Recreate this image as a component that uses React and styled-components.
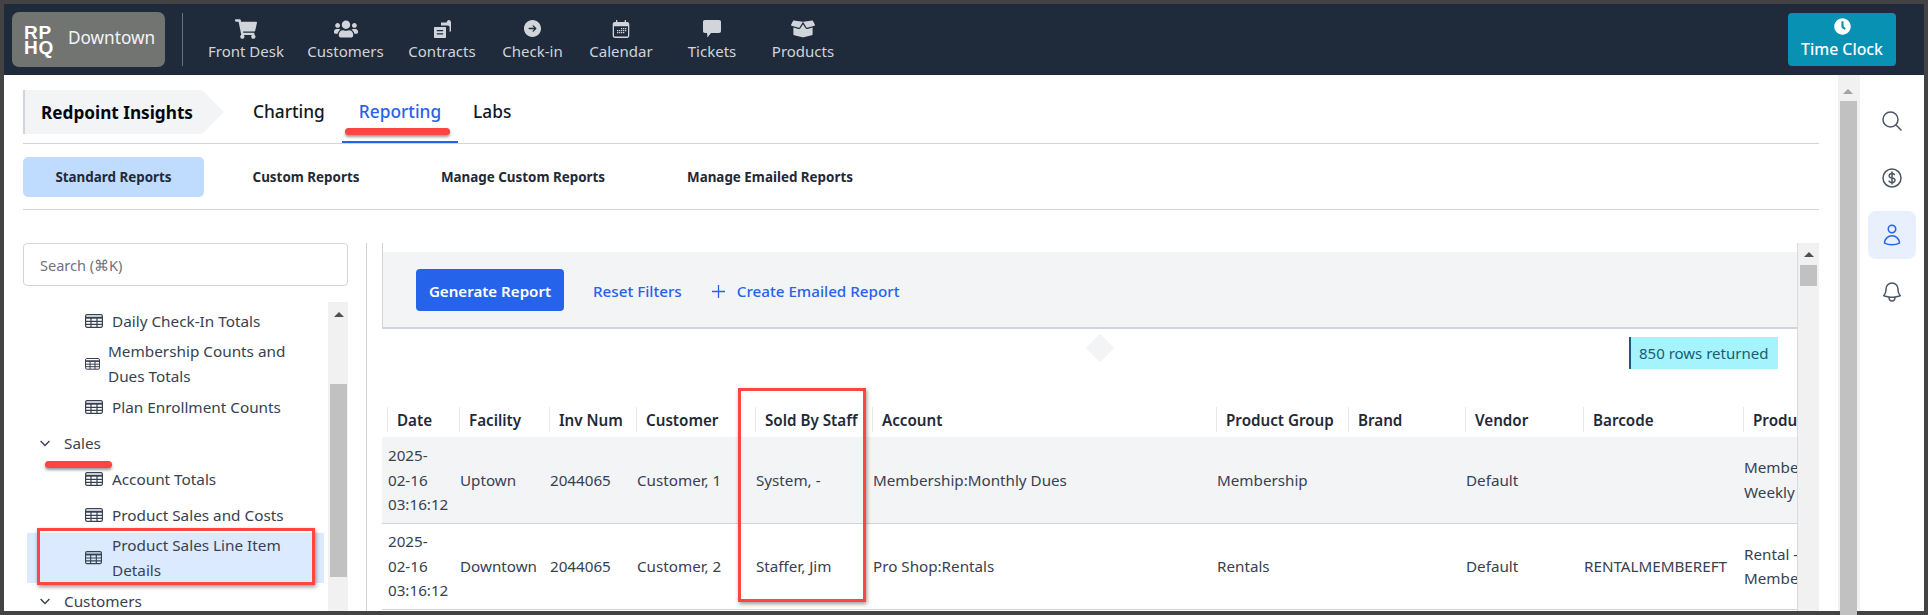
import React from 'react';
import styled, { createGlobalStyle } from 'styled-components';
import { FaShoppingCart, FaUsers, FaBoxOpen, FaClock } from 'react-icons/fa';
import { HiArrowRightCircle } from 'react-icons/hi2';

const Global = createGlobalStyle`
  html, body { margin: 0; padding: 0; background: #434343; }
  * { box-sizing: border-box; }
  body { font-family: "Noto Sans", "Open Sans", Arial, sans-serif; }
`;

const Frame = styled.div`
  position: relative; width: 1928px; height: 615px; padding: 4px; background: #434343;
  display: flex; flex-direction: column; overflow: hidden;
`;
const Nav = styled.header`
  height: 71px; flex: none; background: #1f2a3a; display: flex; align-items: center; padding: 0 28px 0 8px;
`;
const Brand = styled.div`
  width: 153px; height: 55px; background: #727472; border-radius: 7px; display: flex; align-items: center; padding-left: 12px; flex: none;
`;
const BrandMark = styled.div`
  font: bold 19px/15px "Liberation Sans", Arial, sans-serif; color: #fff; width: 44px; letter-spacing: .9px; margin-top: 1px;
`;
const BrandName = styled.span`
  color: #f3f4f6; font-size: 17.2px; margin-top: -4px;
`;
const NavDivider = styled.div`
  width: 1px; height: 53px; background: #667080; margin: 0 13px 0 17px; flex: none;
`;
const NavItem = styled.a`
  width: ${p => p.$w}px; flex: none; display: flex; flex-direction: column; align-items: center; color: #d1d5db; font-size: 15px; line-height: 20px; white-space: nowrap;
`;
const NavIcon = styled.span`
  height: 24px; display: flex; align-items: center; justify-content: center; margin-bottom: 0; margin-top: -2px; color: #d1d5db;
`;
const TimeClock = styled.button`
  margin-left: auto; width: 108px; height: 53px; border: 0; border-radius: 4px; background: #0891b2; color: #fff; font: 500 15.8px/20px "Noto Sans", sans-serif; display: flex; flex-direction: column; align-items: center; justify-content: center; padding: 0 0 3px; gap: 4px;
`;

const Body = styled.div`
  flex: 1; min-height: 0; display: flex; background: #fff;
`;
const Main = styled.main`
  width: 1815px; flex: none; padding: 15px 0 0 19px; display: flex; flex-direction: column; min-height: 0;
`;
const TabRow = styled.nav`
  height: 54px; flex: none; border-bottom: 1px solid #d1d5db; display: flex; align-items: flex-start;
`;
const Crumb = styled.div`
  width: 201px; height: 44px; background: #f3f4f6; border-left: 2px solid #d1d5db; font-weight: 700; font-size: 17.2px; color: #030712; display: flex; align-items: center; padding-left: 16px; clip-path: polygon(0 0, 179px 0, 100% 50%, 179px 100%, 0 100%);
`;
const Tab = styled.a`
  height: 53px; padding: 10px ${p => p.$px}px 0; margin-left: ${p => p.$ml ?? 0}px; display: flex; align-items: flex-start; font-size: 17.3px; line-height: 24px; font-weight: 500; color: ${p => p.$active ? '#2563eb' : '#111827'}; border-bottom: 2px solid ${p => p.$active ? '#2563eb' : 'transparent'};
`;
const SubRow = styled.nav`
  height: 66px; flex: none; padding-top: 13px; border-bottom: 1px solid #d1d5db; display: flex; align-items: flex-start;
`;
const SubTab = styled.a`
  height: 40px; width: ${p => p.$w}px; border-radius: 5px; background: ${p => p.$active ? '#bfdbfe' : 'transparent'}; display: flex; align-items: center; justify-content: center; font-size: 13.4px; font-weight: 700; color: #1f2937; white-space: nowrap;
`;
const Split = styled.div`
  flex: 1; min-height: 0; display: flex; padding-top: 33px;
`;
const Sidebar = styled.aside`
  width: 344px; flex: none; border-right: 1px solid #d1d5db; padding-right: 18px; display: flex; flex-direction: column; min-height: 0;
`;
const Search = styled.div`
  height: 43px; flex: none; border: 1px solid #d1d5db; border-radius: 4px; padding-left: 16px; display: flex; align-items: center; color: #6b7280; font-size: 14.5px;
`;
const Tree = styled.div`
  margin-top: 16px; flex: 1; min-height: 0; display: flex; overflow: hidden;
`;
const TreeList = styled.ul`
  list-style: none; margin: 0; padding: 1px 4px 0; width: 305px; flex: none; overflow: hidden;
`;
const Leaf = styled.li`
  min-height: 36px; display: flex; align-items: center; padding-left: 58px; gap: ${p => p.$gap ?? 9}px; color: #374151; font-size: 15.3px; line-height: 25px; background: ${p => p.$selected ? '#dbeafe' : 'transparent'};
`;
const Group = styled.li`
  height: 36px; display: flex; align-items: center; padding-left: 13px; gap: 14px; color: #374151; font-size: 15.3px;
`;
const LeafLabel = styled.span`
  max-width: 200px;
`;
const Scroll = styled.div`
  width: ${p => p.$w}px; flex: none; background: #f1f1f1; display: flex; flex-direction: column; align-items: center; border-left: ${p => p.$line ? '1px solid #d9dbdf' : '0'}; padding-right: ${p => p.$pr ?? 0}px;
`;
const ScrollArrow = styled.div`
  flex: none; margin-top: ${p => p.$mt}px; width: 0; height: 0; border-left: 5px solid transparent; border-right: 5px solid transparent; border-bottom: 5px solid ${p => p.$dim ? '#a3a3a3' : '#505050'};
`;
const ScrollThumb = styled.div`
  flex: none; width: 17px; height: ${p => p.$h}px; margin-top: ${p => p.$mt}px; background: #c1c1c1;
`;
const Report = styled.section`
  flex: 1; min-width: 0; display: flex; margin-left: 15px; min-height: 0;
`;
const ReportBody = styled.div`
  position: relative; width: 1415px; flex: none; overflow: hidden; display: flex; flex-direction: column; align-items: stretch;
`;
const FilterBox = styled.div`
  flex: none; padding-top: 9px; border-left: 1px solid #d1d5db; border-bottom: 2px solid #d1d5db;
`;
const FilterPanel = styled.div`
  height: 75px; background: #f3f4f6; display: flex; align-items: center; padding: 0 0 7px 33px;
`;
const Generate = styled.button`
  width: 148px; height: 42px; border: 0; border-radius: 4px; background: #2563eb; color: #fff; font: 600 15.1px "Noto Sans", sans-serif; padding: 3px 0 0; margin-top: 7px;
`;
const LinkBtn = styled.a`
  color: #2563eb; font-size: 15.2px; font-weight: 500; margin-left: ${p => p.$ml}px; margin-top: 10px; display: flex; align-items: center; gap: 12px;
`;
const Diamond = styled.div`
  position: absolute; left: 708px; top: 95px; width: 20px; height: 20px; background: #f3f4f6; transform: rotate(45deg);
`;
const StatusRow = styled.div`
  flex: none; display: flex; justify-content: flex-end; padding: 8px 19px 0 0;
`;
const Rows = styled.div`
  width: 149px; height: 32px; background: #a5f3fc; border-left: 2px solid #155e75; color: #155e75; font-size: 15px; display: flex; align-items: center; padding-left: 8px; white-space: nowrap;
`;
const DataTable = styled.table`
  margin-top: 38px; table-layout: fixed; border-collapse: collapse; width: 1461px; flex: none; align-self: flex-start;
`;
const Th = styled.th`
  height: 30px; padding: 0 0 5px ${p => p.$first ? 5 : 0}px; text-align: left; vertical-align: top;
`;
const ThLabel = styled.div`
  height: 25px; border-left: 1px solid #e5e7eb; padding-left: 9px; font-size: 15.2px; font-weight: 600; line-height: 27px; color: #1f2937; white-space: nowrap;
`;
const Tr = styled.tr`
  background: ${p => p.$alt ? '#f3f4f6' : '#fff'}; border-bottom: 1px solid #d1d5db; height: 86px;
`;
const Td = styled.td`
  padding: 0 0 0 ${p => p.$first ? 6 : 1}px; font-size: 15.2px; line-height: 24.5px; color: #374151; white-space: pre-line;
`;
const RailSpacer = styled.div`
  width: 19px; flex: none;
`;
const Rail = styled.div`
  flex: 1; display: flex; flex-direction: column; align-items: center; padding-top: 22px; gap: 9px; color: #4b5563;
`;
const RailBtn = styled.button`
  width: 48px; height: 48px; border: 0; border-radius: 8px; padding: 0; display: flex; align-items: center; justify-content: center; background: ${p => p.$active ? '#e9f0fd' : 'transparent'}; color: ${p => p.$active ? '#2563eb' : '#4b5563'};
`;
const Mark = styled.div`
  position: absolute; left: ${p => p.$x}px; top: ${p => p.$y}px; width: ${p => p.$w}px; height: ${p => p.$h}px; border: 3px solid #f44; box-shadow: 1px 2px 4px rgba(0,0,0,.4);
`;
const Stroke = styled.div`
  position: absolute; left: ${p => p.$x}px; top: ${p => p.$y}px; width: ${p => p.$w}px; height: 7px; border-radius: 4px; background: #f44; box-shadow: 0 2px 3px rgba(0,0,0,.4);
`;

const TableIcon = ({ w = 18 }) => (
  <svg width={w} height={w * 0.78} viewBox="0 0 18 14" fill="none" stroke="#374151" strokeWidth="1.2">
    <rect x=".6" y=".6" width="16.8" height="12.8" rx="1.6" />
    <path d="M.6 3.7h16.8" strokeWidth="2" />
    <path d="M.6 7.4h16.8M.6 10.4h16.8M6 4v9.4M12 4v9.4" />
  </svg>
);
const Chevron = () => (
  <svg width="10" height="7" viewBox="0 0 10 7" fill="none" stroke="#374151" strokeWidth="1.4"><path d="M.6 1l4.4 4.4L9.4 1" /></svg>
);
const Hero = ({ d }) => (
  <svg width="24" height="24" viewBox="0 0 24 24" fill="none" stroke="currentColor" strokeWidth="1.5" strokeLinecap="round" strokeLinejoin="round"><path d={d} /></svg>
);
const ContractIcon = () => (
  <svg width="20" height="20" viewBox="0 0 20 20" fill="currentColor">
    <path d="M9 3.500h5.600c.3-1.600 1.200-2.600 2.300-2.600 1.200 0 2.100 1.100 2.100 2.600v7.700c0 .9-.5 1.600-1.400 1.800V8.300c0-.9-.8-1.700-1.700-1.700H9z" />
    <path fillRule="evenodd" d="M3 8h10c.6 0 1 .4 1 1v9c0 .6-.4 1-1 1H3c-.6 0-1-.4-1-1V9c0-.6.4-1 1-1zm1.800 3v1.300h6.400V11zm0 3.200v1.300h6.400v-1.300z" />
  </svg>
);
const CalendarIcon = () => (
  <svg width="18" height="18" viewBox="0 0 18 18" fill="currentColor">
    <path fillRule="evenodd" d="M4 0h1.300v2h7.400V0H14v2h1c1.400 0 2.300.9 2.300 2.200v11.400c0 1.400-.9 2.400-2.300 2.400H3c-1.400 0-2.300-1-2.300-2.400V4.200C.7 2.900 1.600 2 3 2h1zM2 6.200v9.300c0 .6.400 1.100 1 1.100h12c.6 0 1-.5 1-1.100V6.200z" />
    <path d="M9 8h1.300v1.300H9zM11 8h1.300v1.300H11zM13 8h1.300v1.300H13zM5 10h1.300v1.300H5zM7 10h1.300v1.300H7zM9 10h1.300v1.300H9zM11 10h1.300v1.300H11zM13 10h1.300v1.300H13zM5 12h1.300v1.300H5zM7 12h1.300v1.300H7zM9 12h1.300v1.300H9zM11 12h1.300v1.300H11z" />
  </svg>
);
const BubbleIcon = () => (
  <svg width="20" height="20" viewBox="0 0 20 20" fill="currentColor">
    <path d="M3 1h14c1.300 0 2 .7 2 2v9c0 1.300-.7 2-2 2H9l-3.500 4.500L5 14H3c-1.300 0-2-.7-2-2V3c0-1.300.7-2 2-2z" />
  </svg>
);

const navItems = [
  ['Front Desk', 100, <FaShoppingCart size={22} />],
  ['Customers', 99, <FaUsers size={24} />],
  ['Contracts', 94, <ContractIcon />],
  ['Check-in', 87, <HiArrowRightCircle size={21} />],
  ['Calendar', 90, <CalendarIcon />],
  ['Tickets', 92, <BubbleIcon />],
  ['Products', 90, <FaBoxOpen size={24} />],
];
const cols = [77, 90, 87, 119, 117, 344, 132, 117, 118, 160, 100];
const heads = ['Date', 'Facility', 'Inv Num', 'Customer', 'Sold By Staff', 'Account', 'Product Group', 'Brand', 'Vendor', 'Barcode', 'Product Name'];
const rows = [
  ['2025-\n02-16\n03:16:12', 'Uptown', '2044065', 'Customer, 1', 'System, -', 'Membership:Monthly Dues', 'Membership', '', 'Default', '', 'Membership\nWeekly Dues'],
  ['2025-\n02-16\n03:16:12', 'Downtown', '2044065', 'Customer, 2', 'Staffer, Jim', 'Pro Shop:Rentals', 'Rentals', '', 'Default', 'RENTALMEMBEREFT', 'Rental -\nMembership'],
];
const icons = {
  search: 'm21 21-5.197-5.197m0 0A7.5 7.5 0 1 0 5.196 5.196a7.5 7.5 0 0 0 10.607 10.607Z',
  dollar: 'M12 6v12m-3-2.818.879.659c1.171.879 3.07.879 4.242 0 1.172-.879 1.172-2.303 0-3.182C13.536 12.219 12.768 12 12 12c-.725 0-1.45-.22-2.003-.659-1.106-.879-1.106-2.303 0-3.182s2.9-.879 4.006 0l.415.33M21 12a9 9 0 1 1-18 0 9 9 0 0 1 18 0Z',
  user: 'M15.75 6a3.75 3.75 0 1 1-7.5 0 3.75 3.75 0 0 1 7.5 0ZM4.501 20.118a7.5 7.5 0 0 1 14.998 0A17.933 17.933 0 0 1 12 21.75c-2.676 0-5.216-.584-7.499-1.632Z',
  bell: 'M14.857 17.082a23.848 23.848 0 0 0 5.454-1.31A8.967 8.967 0 0 1 18 9.75V9A6 6 0 0 0 6 9v.75a8.967 8.967 0 0 1-2.312 6.022c1.733.64 3.56 1.085 5.455 1.31m5.714 0a24.255 24.255 0 0 1-5.714 0m5.714 0a3 3 0 1 1-5.714 0',
};

export default function App() {
  return (
    <Frame>
      <Global />
      <Nav>
        <Brand>
          <BrandMark>RP<br />HQ</BrandMark>
          <BrandName>Downtown</BrandName>
        </Brand>
        <NavDivider />
        {navItems.map(([label, w, icon]) => (
          <NavItem key={label} $w={w}><NavIcon>{icon}</NavIcon>{label}</NavItem>
        ))}
        <TimeClock><FaClock size={17} />Time Clock</TimeClock>
      </Nav>
      <Body>
        <Main>
          <TabRow>
            <Crumb>Redpoint Insights</Crumb>
            <Tab $ml={12} $px={17}>Charting</Tab>
            <Tab $active $px={17}>Reporting</Tab>
            <Tab $px={15}>Labs</Tab>
          </TabRow>
          <SubRow>
            <SubTab $active $w={181}>Standard Reports</SubTab>
            <SubTab $w={204}>Custom Reports</SubTab>
            <SubTab $w={230}>Manage Custom Reports</SubTab>
            <SubTab $w={264}>Manage Emailed Reports</SubTab>
          </SubRow>
          <Split>
            <Sidebar>
              <Search>Search (⌘K)</Search>
              <Tree>
                <TreeList>
                  <Leaf><TableIcon /><LeafLabel>Daily Check-In Totals</LeafLabel></Leaf>
                  <Leaf $gap={8}><TableIcon w={15} /><LeafLabel>Membership Counts and Dues Totals</LeafLabel></Leaf>
                  <Leaf><TableIcon /><LeafLabel>Plan Enrollment Counts</LeafLabel></Leaf>
                  <Group><Chevron />Sales</Group>
                  <Leaf><TableIcon /><LeafLabel>Account Totals</LeafLabel></Leaf>
                  <Leaf><TableIcon /><LeafLabel>Product Sales and Costs</LeafLabel></Leaf>
                  <Leaf $selected $gap={10}><TableIcon w={17} /><LeafLabel>Product Sales Line Item Details</LeafLabel></Leaf>
                  <Group><Chevron />Customers</Group>
                </TreeList>
                <Scroll $w={21}>
                  <ScrollArrow $mt={10} />
                  <ScrollThumb $mt={67} $h={193} />
                </Scroll>
              </Tree>
            </Sidebar>
            <Report>
              <ReportBody>
                <FilterBox>
                  <FilterPanel>
                    <Generate>Generate Report</Generate>
                    <LinkBtn $ml={29}>Reset Filters</LinkBtn>
                    <LinkBtn $ml={30}>
                      <svg width="13" height="13" viewBox="0 0 13 13" stroke="currentColor" strokeWidth="1.3"><path d="M6.500 0v13M0 6.500h13" /></svg>
                      Create Emailed Report
                    </LinkBtn>
                  </FilterPanel>
                </FilterBox>
                <Diamond />
                <StatusRow><Rows>850 rows returned</Rows></StatusRow>
                <DataTable>
                  <colgroup>{cols.map((w, i) => <col key={i} width={w} />)}</colgroup>
                  <thead>
                    <tr>{heads.map((h, i) => <Th key={h} $first={i === 0}><ThLabel>{h}</ThLabel></Th>)}</tr>
                  </thead>
                  <tbody>
                    {rows.map((r, ri) => (
                      <Tr key={ri} $alt={ri === 0}>
                        {r.map((c, i) => <Td key={i} $first={i === 0}>{c}</Td>)}
                      </Tr>
                    ))}
                  </tbody>
                </DataTable>
              </ReportBody>
              <Scroll $w={22} $line>
                <ScrollArrow $mt={9} />
                <ScrollThumb $mt={8} $h={21} />
              </Scroll>
            </Report>
          </Split>
        </Main>
        <RailSpacer />
        <Scroll $w={22} $pr={2}>
          <ScrollArrow $mt={14} $dim />
          <ScrollThumb $mt={7} $h={520} />
        </Scroll>
        <Rail>
          <RailBtn><Hero d={icons.search} /></RailBtn>
          <RailBtn><Hero d={icons.dollar} /></RailBtn>
          <RailBtn $active><Hero d={icons.user} /></RailBtn>
          <RailBtn><Hero d={icons.bell} /></RailBtn>
        </Rail>
      </Body>
      <Stroke $x={345} $y={128} $w={105} />
      <Stroke $x={45} $y={461} $w={67} />
      <Mark $x={37} $y={528} $w={278} $h={57} />
      <Mark $x={738} $y={388} $w={128} $h={214} />
    </Frame>
  );
}
